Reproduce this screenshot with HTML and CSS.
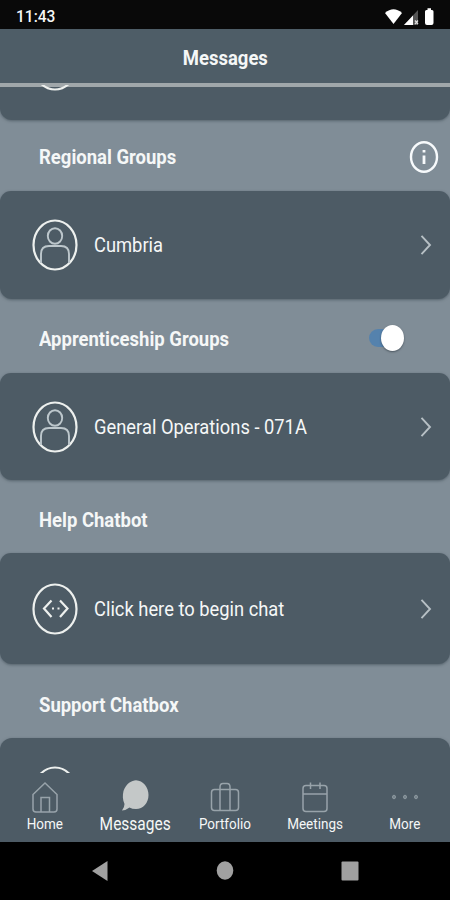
FILE: index.html
```html
<!DOCTYPE html>
<html lang="en">
<head>
<meta charset="utf-8">
<title>Messages</title>
<link rel="stylesheet" href="styles.css">
</head>
<body>
<div class="phone">
  <div class="status">
    <span class="label clock">11:43</span>
    <svg width="52" height="20" viewBox="0 0 52 20">
      <path d="M1 6Q9.500-1.500 18 6L9.500 17Z" fill="#fff"/>
      <path d="M20 18L34 3V18Z" fill="#555"/>
      <path d="M20 18L29 8.500V18Z" fill="#fff"/>
      <path d="M31 13.500l3 3.500m0-3.500l-3 3.500" stroke="#ddd" stroke-width="1.300"/>
      <path d="M41 4.500q0-1.500 1.500-1.500h1V1.200h3.500V3h1q1.500 0 1.500 1.500V16q0 2-2 2h-4.500q-2 0-2-2Z" fill="#fff"/>
    </svg>
  </div>
  <header class="header"><h1 class="label title">Messages</h1></header>
  <main class="content">
    <div class="card card-top">
      <svg class="arc" width="46" height="6" viewBox="0 45 46 6"><ellipse cx="23" cy="25" rx="21.500" ry="24.500"/></svg>
    </div>
    <section>
      <div class="section-head regional">
        <h2 class="label">Regional Groups</h2>
        <svg class="info" width="30" height="34" viewBox="0 0 30 34">
          <ellipse cx="15" cy="17" rx="13" ry="14.700"/>
          <path d="M15 15.500V24" stroke-width="2.800"/><path d="M15 10v2.500" stroke-width="2.800"/>
        </svg>
      </div>
      <div class="card regional-card">
        <svg class="avatar" width="46" height="52" viewBox="0 0 46 52">
          <ellipse cx="23" cy="26" rx="21.500" ry="24.500"/>
          <g class="person"><ellipse cx="23" cy="17" rx="7.200" ry="7.800"/><path d="M9 44V35Q9 27 17 27H29Q37 27 37 35V44"/></g>
        </svg>
        <span class="label item">Cumbria</span>
        <svg class="chevron" width="12" height="22" viewBox="0 0 12 22"><path d="M1.500 1.800L10 11L1.500 20.200"/></svg>
      </div>
    </section>
    <section>
      <div class="section-head apprentice">
        <h2 class="label">Apprenticeship Groups</h2>
        <div class="switch"><i class="thumb"></i></div>
      </div>
      <div class="card apprentice-card">
        <svg class="avatar" width="46" height="52" viewBox="0 0 46 52">
          <ellipse cx="23" cy="26" rx="21.500" ry="24.500"/>
          <g class="person"><ellipse cx="23" cy="17" rx="7.200" ry="7.800"/><path d="M9 44V35Q9 27 17 27H29Q37 27 37 35V44"/></g>
        </svg>
        <span class="label item">General Operations - 071A</span>
        <svg class="chevron" width="12" height="22" viewBox="0 0 12 22"><path d="M1.500 1.800L10 11L1.500 20.200"/></svg>
      </div>
    </section>
    <section>
      <div class="section-head help">
        <h2 class="label">Help Chatbot</h2>
      </div>
      <div class="card help-card">
        <svg class="avatar" width="46" height="52" viewBox="0 0 46 52">
          <ellipse cx="23" cy="26" rx="21.500" ry="24.500"/>
          <path d="M19.500 17.500L12 25.500L19.500 34M28 17.500L35.500 25.500L28 34"/>
          <path d="M20 25.500h2M25.500 25.500h2"/>
        </svg>
        <span class="label item">Click here to begin chat</span>
        <svg class="chevron" width="12" height="22" viewBox="0 0 12 22"><path d="M1.500 1.800L10 11L1.500 20.200"/></svg>
      </div>
    </section>
    <section>
      <div class="section-head support">
        <h2 class="label">Support Chatbox</h2>
      </div>
      <div class="card support-card">
        <svg class="arc" width="46" height="7" viewBox="0 0 46 7"><ellipse cx="23" cy="26" rx="21.500" ry="24.500"/></svg>
      </div>
    </section>
  </main>
  <nav class="tabs">
    <a class="tab">
      <svg width="30" height="34" viewBox="0 0 30 34"><path d="M3 13.500L15 2L27 13.500V28Q27 31 24 31H6Q3 31 3 28ZM11 31V16.500H19.500V31"/></svg>
      <span class="label">Home</span>
    </a>
    <a class="tab">
      <svg width="30" height="34" viewBox="0 0 30 34"><path class="bubble" d="M2 29.500Q4.500 26.500 4.500 23C2.500 19 2.500 14 3.500 10C6 2.500 12-.8 16-.8C23-.5 28.500 6 28.500 14C28.500 22 23 28 16 28Q12 28 9.500 26.500Q6.500 29 2 29.500Z"/></svg>
      <span class="label t-messages">Messages</span>
    </a>
    <a class="tab">
      <svg width="30" height="34" viewBox="0 0 30 34"><path d="M4.500 8.500H25.500Q28.500 8.500 28.500 11.500V26.500Q28.500 29.500 25.500 29.500H4.500Q1.500 29.500 1.500 26.500V11.500Q1.500 8.500 4.500 8.500ZM10 29.500V6Q10 2.500 13 2.500H17Q20 2.500 20 6V29.500"/></svg>
      <span class="label">Portfolio</span>
    </a>
    <a class="tab">
      <svg width="30" height="34" viewBox="0 0 30 34"><path d="M6 4.500H24Q27 4.500 27 7.500V27.500Q27 30.500 24 30.500H6Q3 30.500 3 27.500V7.500Q3 4.500 6 4.500ZM3 13H27M10.500 1.500V8M20 1.500V8"/></svg>
      <span class="label">Meetings</span>
    </a>
    <a class="tab">
      <svg width="30" height="34" viewBox="0 0 30 34"><g class="dots"><ellipse cx="4" cy="16" rx="1.500" ry="1.800"/><ellipse cx="15" cy="16" rx="1.500" ry="1.800"/><ellipse cx="26" cy="16" rx="1.500" ry="1.800"/></g></svg>
      <span class="label">More</span>
    </a>
  </nav>
  <div class="system">
    <svg width="18" height="22" viewBox="0 0 18 22"><path d="M1 11L16.500 1V21Z"/></svg>
    <svg width="18" height="22" viewBox="0 0 18 22"><ellipse cx="9" cy="10.500" rx="8.300" ry="9.200"/></svg>
    <svg width="18" height="22" viewBox="0 0 18 22"><rect x=".5" y="1.500" width="17" height="19" rx="1"/></svg>
  </div>
</div>
</body>
</html>
```
FILE: styles.css
```css
* { box-sizing: border-box; }
body { margin: 0; background: #000; font-family: Roboto, "Liberation Sans", sans-serif; color: #f5f7f7; }
h1, h2 { margin: 0; }
svg { display: block; flex: none; fill: none; }
.phone { width: 450px; height: 900px; display: flex; flex-direction: column; overflow: hidden; }
.label { display: block; white-space: nowrap; transform-origin: left center; }

.status { height: 29px; flex: none; background: #090909; display: flex; align-items: center; justify-content: space-between; padding: 4px 14px 0 16px; }
.clock { font-size: 16.500px; line-height: 20px; font-weight: 500; transform: scaleX(.94); }
.header { height: 54px; flex: none; background: #4e5d67; display: flex; align-items: center; justify-content: center; padding-top: 4px; }
.title { font-size: 21px; font-weight: 700; line-height: 26px; transform: scaleX(.88); transform-origin: center; }

.content { height: 690px; flex: none; background: #808d97; overflow: hidden; }
.card { background: #4d5b65; border-radius: 11px 11px 12px 12px; display: flex; align-items: center; padding: 0 18px 0 32px; box-shadow: 0 1px 3px rgba(50, 63, 73, .55); }
.card-top { height: 37px; border-top: 4px solid #a0a7aa; border-radius: 0 0 12px 12px; align-items: flex-start; }
.card-top .arc { margin-top: -2px; }
.regional-card { height: 108px; }
.apprentice-card { height: 107px; }
.help-card { height: 111px; }
.support-card { height: 104px; align-items: flex-start; padding-top: 28px; border-radius: 12px 12px 0 0; }

.section-head { display: flex; align-items: center; padding-left: 39px; justify-content: space-between; }
.section-head .label { font-size: 21px; line-height: 26px; font-weight: 700; transform: scaleX(.88); }
.regional { height: 71px; padding-right: 11px; padding-top: 3px; }
.apprentice { height: 74px; padding-right: 46px; padding-top: 6px; }
.apprentice .switch { margin-top: -2px; }
.help { height: 73px; padding-top: 6px; }
.support { height: 74px; padding-top: 7px; }

.avatar, .arc { stroke: #edf0ee; stroke-width: 2.200; }
.person { stroke: #bdc7cc; stroke-width: 1.900; }
.info { stroke: #f7fafc; stroke-width: 2.400; }
.item { font-size: 21px; line-height: 26px; margin-left: 16px; transform: scaleX(.873); }
.chevron { margin-left: auto; stroke: #b7c0c5; stroke-width: 1.900; }
.switch { width: 35px; height: 26px; display: flex; align-items: center; justify-content: flex-end; position: relative; }
.switch::before { content: ""; position: absolute; left: 0; top: 4px; width: 28px; height: 18px; border-radius: 9px; background: #5582ad; }
.thumb { width: 23px; height: 26px; flex: none; position: relative; border-radius: 50%; background: #fff; box-shadow: 0 1px 2px rgba(40, 50, 60, .6); }

.tabs { height: 69px; flex: none; background: #4d5b65; display: flex; }
.tab { width: 90px; display: flex; flex-direction: column; align-items: center; padding-top: 8px; }
.tab svg { stroke: #98a3aa; stroke-width: 1.500; overflow: visible; }
.tab .label { font-size: 15.500px; line-height: 19px; transform: scaleX(.87); transform-origin: center; }
.tab .t-messages { font-size: 17.500px; transform: scaleX(.885); }
.tab .bubble { fill: #c4c8c8; stroke: none; }
.dots { stroke: #8c989f; fill: #77848c; stroke-width: 1; }
.system { height: 58px; flex: none; background: #000; display: flex; justify-content: center; align-items: center; gap: 107px; }
.system svg { fill: #a0a0a0; }
```
